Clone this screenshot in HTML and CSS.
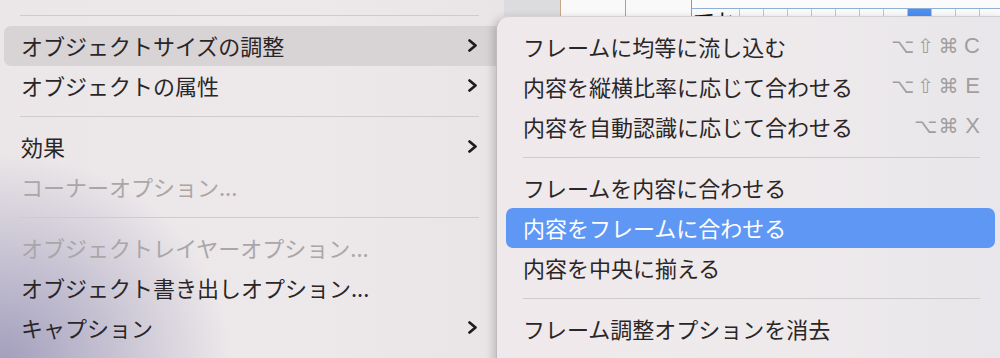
FILE: index.html
```html
<!DOCTYPE html>
<html lang="ja">
<head>
    <meta charset="UTF-8">
    <title>オブジェクトサイズの調整</title>
    <link rel="stylesheet" href="styles.css">
</head>
<body>

<div class="screen">
    <div class="menu">
        <div class="sep"><div class="line"></div></div>
        <div class="item active">
            <span class="label">オブジェクトサイズの調整</span>
            <svg class="chev" width="11" height="13" viewBox="0 0 11 13"><polyline points="2.5,1.5 8.5,6.5 2.5,11.5"/></svg>
        </div>
        <div class="item">
            <span class="label">オブジェクトの属性</span>
            <svg class="chev" width="11" height="13" viewBox="0 0 11 13"><polyline points="2.5,1.5 8.5,6.5 2.5,11.5"/></svg>
        </div>
        <div class="sep"><div class="line"></div></div>
        <div class="item">
            <span class="label">効果</span>
            <svg class="chev" width="11" height="13" viewBox="0 0 11 13"><polyline points="2.5,1.5 8.5,6.5 2.5,11.5"/></svg>
        </div>
        <div class="item disabled"><span class="label">コーナーオプション...</span></div>
        <div class="sep"><div class="line"></div></div>
        <div class="item disabled"><span class="label">オブジェクトレイヤーオプション...</span></div>
        <div class="item"><span class="label">オブジェクト書き出しオプション...</span></div>
        <div class="item">
            <span class="label">キャプション</span>
            <svg class="chev" width="11" height="13" viewBox="0 0 11 13"><polyline points="2.5,1.5 8.5,6.5 2.5,11.5"/></svg>
        </div>
    </div>

    <div class="side">
        <div class="doc">
            <div class="gap"></div>
            <div class="panel"></div>
            <div class="vline tan"></div>
            <div class="page"></div>
            <div class="vline"></div>
            <div class="page"></div>
            <div class="grid">
                <div class="grid-top"></div>
                <div class="cells">
                    <div class="cell first"><span class="cell-text">てお</span></div>
                    <div class="cell"></div>
                    <div class="cell"></div>
                    <div class="cell"></div>
                    <div class="cell"></div>
                    <div class="cell"></div>
                    <div class="cell"></div>
                    <div class="cell"></div>
                    <div class="cell blue"></div>
                    <div class="cell"></div>
                    <div class="cell"></div>
                    <div class="cell"></div>
                </div>
            </div>
        </div>

        <div class="submenu">
            <div class="item">
                <span class="label">フレームに均等に流し込む</span>
                <span class="keys"><span class="k">⌥</span><span class="k">⇧</span><span class="k">⌘</span><span class="k letter">C</span></span>
            </div>
            <div class="item">
                <span class="label">内容を縦横比率に応じて合わせる</span>
                <span class="keys"><span class="k">⌥</span><span class="k">⇧</span><span class="k">⌘</span><span class="k letter">E</span></span>
            </div>
            <div class="item">
                <span class="label">内容を自動認識に応じて合わせる</span>
                <span class="keys"><span class="k">⌥</span><span class="k">⌘</span><span class="k letter">X</span></span>
            </div>
            <div class="sep"><div class="line"></div></div>
            <div class="item"><span class="label">フレームを内容に合わせる</span></div>
            <div class="item selected"><span class="label">内容をフレームに合わせる</span></div>
            <div class="item"><span class="label">内容を中央に揃える</span></div>
            <div class="sep"><div class="line"></div></div>
            <div class="item"><span class="label">フレーム調整オプションを消去</span></div>
            <div class="sep"><div class="line"></div></div>
        </div>
    </div>
</div>

</body>
</html>
```

FILE: styles.css
```css
body {
    margin: 0;
    width: 1000px;
    height: 358px;
    overflow: hidden;
    background-color: #dcdbdd;
    font-family: "Noto Sans CJK JP", "Noto Sans", sans-serif;
    color: #2a2627;
}
.screen {
    display: flex;
    height: 358px;
}

/* main context menu */
.menu {
    flex: none;
    width: 497px;
    height: 358px;
    padding: 5px 4px 0 4px;
    background:
        radial-gradient(ellipse 230px 210px at 0 100%, rgba(158, 154, 186, 0.95), rgba(158, 154, 186, 0) 100%),
        linear-gradient(90deg, #ebe6e8, #ede8ea 60%, #e9e5e7);
}
.item {
    display: flex;
    align-items: center;
    justify-content: space-between;
    height: 40px;
    padding: 0 23px 0 17px;
    font-size: 22px;
    white-space: nowrap;
    border-radius: 7px;
}
.label {
    line-height: 22px;
    margin-bottom: 3px;
}
.item.active {
    background-color: #d8d3d5;
}
.item.disabled {
    color: #aaa6a8;
}
.chev {
    flex: none;
    margin-bottom: 1px;
}
.chev polyline {
    fill: none;
    stroke: #1f1c1d;
    stroke-width: 2.7;
    stroke-linecap: round;
    stroke-linejoin: round;
}
.sep {
    height: 21px;
    padding: 10px 22px 0 16px;
    box-sizing: border-box;
}
.line {
    height: 1px;
    background-color: #cfcacc;
}

/* right side: document strip + submenu */
.side {
    position: relative;
    z-index: 1;
    flex: none;
    width: 508px;
    margin-left: -9px;
    display: flex;
    flex-direction: column;
}
.doc {
    flex: none;
    height: 16px;
    display: flex;
}
.gap {
    width: 9px;
}
.panel {
    width: 60px;
    background-color: #dcdcde;
}
.vline {
    width: 1px;
    background-color: #a3a3a5;
}
.vline.tan {
    background-color: #c8a886;
}
.page {
    width: 70px;
    background-color: #f9f9fa;
}
.grid {
    flex: 1;
    border-left: 1px solid #7f9cc2;
    background-color: #fbfbfc;
    display: flex;
    flex-direction: column;
}
.grid-top {
    height: 8px;
    border-bottom: 1px solid #8fb0d6;
}
.cells {
    flex: 1;
    display: flex;
    overflow: hidden;
}
.cell {
    flex: none;
    width: 23px;
    border-right: 1px solid #b3c9e2;
}
.cell.first {
    width: 47px;
    height: 7px;
    overflow: hidden;
}
.cell.blue {
    background-color: #4e8ff1;
}
.cell-text {
    display: block;
    height: 7px;
    font-size: 22px;
    line-height: 22px;
    margin-left: 1px;
    color: #111;
    white-space: nowrap;
    overflow: hidden;
}

.submenu {
    flex: 1;
    padding: 10px 9px 0 9px;
    border-top: 1px solid rgba(0, 0, 0, 0.1);
    border-left: 1px solid rgba(0, 0, 0, 0.18);
    border-top-left-radius: 13px;
    background: linear-gradient(90deg, #efe9eb, #eeeaec 60%, #e8e6ea);
    box-shadow: -3px 2px 8px rgba(0, 0, 0, 0.18);
}
.submenu .item {
    padding: 0 15px 0 17px;
}
.submenu .sep {
    padding: 10px 15px 0 17px;
}
.item.selected {
    background-color: #5f97f5;
    color: #fff;
}
.keys {
    display: flex;
    align-items: center;
    margin-bottom: 3px;
    color: #a19ea0;
    font-family: "DejaVu Sans", "Noto Sans CJK JP", sans-serif;
    font-size: 20px;
    line-height: 24px;
}
.k {
    width: 23px;
    text-align: center;
    overflow: hidden;
}
.k.letter {
    width: 20px;
    text-align: right;
    font-family: "Liberation Sans", sans-serif;
    font-size: 22px;
}
```
